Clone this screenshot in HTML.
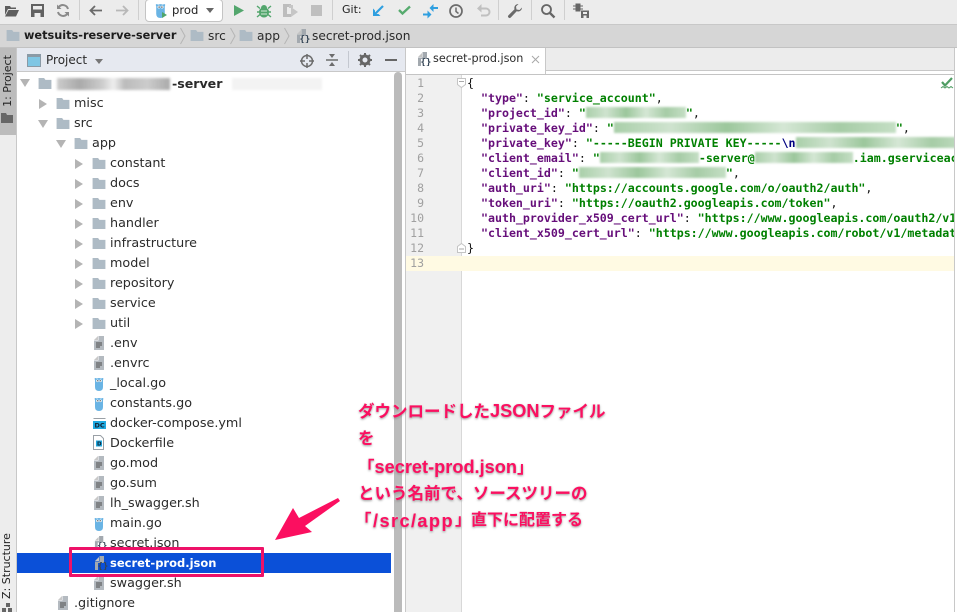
<!DOCTYPE html>
<html lang="ja"><head><meta charset="utf-8"><title>secret-prod.json</title>
<style>
html,body{margin:0;padding:0}
body{width:957px;height:612px;position:relative;overflow:hidden;background:#fff;font-family:"DejaVu Sans","Liberation Sans",sans-serif;color:#1c1c1c}
.a{position:absolute}
svg{position:absolute;overflow:visible}
.t{position:absolute;font-size:12.75px;line-height:20px;height:20px;white-space:nowrap;color:#2b2b2b}
.r{margin-top:1px}
.sep{position:absolute;top:0;width:1px;height:20px;background:#cfcfcf}
.code{position:absolute;left:467px;font:11.62px/15px "DejaVu Sans Mono","Liberation Mono",monospace;white-space:pre;height:15px;color:#111}
.code b{font-weight:bold;color:#660e7a}
.code i{font-style:normal;font-weight:bold;color:#008000}
.code u{text-decoration:none;display:inline-block;height:11px;vertical-align:-1px;background:linear-gradient(90deg,#a9cfa9,#cfe3cf 20%,#9cc79c 40%,#d5e7d5 60%,#a6cca6 80%,#c5dfc5);filter:blur(1px)}
.ln{position:absolute;left:406px;width:18px;text-align:right;font:11.5px/15px "DejaVu Sans Mono",monospace;color:#a0a0a0}
.n{position:absolute;left:358px;font-family:"Liberation Sans","Noto Sans CJK JP",sans-serif;font-weight:bold;font-size:16.5px;line-height:22px;color:#fb0f60;white-space:nowrap;text-shadow:0 1px 2px rgba(70,70,70,.55),0 0 2px #fff}
.n span{font-size:18.2px}
.blur{position:absolute;filter:blur(1.4px)}
</style></head><body>
<svg width="0" height="0" style="position:absolute">
<defs>
<symbol id="f" viewBox="0 0 14 12"><path d="M0 0h6l1.500 2H14v10H0z" fill="#aebbc5"/></symbol>
<symbol id="c" viewBox="0 0 8 10"><path d="M0 0l8 5-8 5z" fill="#b4b4b4"/></symbol>
<symbol id="o" viewBox="0 0 10 8"><path d="M0 0h10L5 8z" fill="#b4b4b4"/></symbol>
<symbol id="d" viewBox="0 0 10 14"><path d="M0 4L4 0v4z" fill="#c8c8c8"/><path d="M4.500 0H10v14H0V4.500h4.500z" fill="#b4bac0"/><path d="M2 7h6M2 9h6M2 11h4" stroke="#4a4a4a" stroke-width="1"/></symbol>
<symbol id="g" viewBox="0 0 10 14"><path d="M1 3Q0 1 1.500 1L3 1.500Q5 .5 7 1.500L8.500 1Q10 1 9 3V10Q9 14 5 14 1 14 1 10z" fill="#6ab4e4"/><circle cx="3.500" cy="3.800" r="1.300" fill="#fff"/><circle cx="6.500" cy="3.800" r="1.300" fill="#fff"/><circle cx="3.700" cy="3.800" r=".6" fill="#333"/><circle cx="6.300" cy="3.800" r=".6" fill="#333"/></symbol>
<symbol id="j" viewBox="0 0 14 14"><path d="M1 5L5 1v4z" fill="#c4c4c4"/><path d="M5.500 0H10v7H4v7H1V5.500h4.500z" fill="#a3a9af"/><text x="3.500" y="13" font-family="DejaVu Sans Mono" font-size="9" font-weight="bold" fill="#345">{}</text></symbol>
</defs></svg>

<!-- toolbar -->
<div class="a" style="left:0;top:0;width:957px;height:24px;background:#ececec;border-bottom:1px solid #c8c8c8"></div>
<svg style="left:5px;top:5px" width="14" height="12" viewBox="0 0 14 12"><path d="M0 1h5l1 1.500h5V4H3L0 10zM3.500 5H14l-3 6.500H0z" fill="#5e5e5e"/></svg>
<svg style="left:31px;top:4px" width="13" height="13" viewBox="0 0 13 13"><path d="M0 0h13v13H0z" fill="#616161"/><path d="M2 2h9v3.500H2z" fill="#ececec"/><path d="M3.500 9h6v4h-6z" fill="#ececec"/></svg>
<svg style="left:56px;top:4px" width="14" height="13" viewBox="0 0 14 13"><path d="M12 5A5.300 5.300 0 0 0 2.800 3M2 8a5.300 5.300 0 0 0 9.200 2" fill="none" stroke="#8a8a8a" stroke-width="2"/><path d="M1 .5v4.500h4.500zM13 12.500V8H8.500z" fill="#8a8a8a"/></svg>
<div class="sep" style="left:79px"></div>
<svg style="left:89px;top:5px" width="13" height="11" viewBox="0 0 13 11"><path d="M13 5.500H2M6 1L1.500 5.500 6 10" fill="none" stroke="#6a6a6a" stroke-width="1.800"/></svg>
<svg style="left:116px;top:5px" width="13" height="11" viewBox="0 0 13 11"><path d="M0 5.500h11M7 1l4.500 4.500L7 10" fill="none" stroke="#b8b8b8" stroke-width="1.800"/></svg>
<div class="sep" style="left:138px"></div>
<div class="a" style="left:145px;top:-1px;width:76px;height:21px;background:#fff;border:1px solid #c4c4c4;border-radius:4px"></div>
<svg style="left:155px;top:3px" width="12" height="15" viewBox="0 0 12 15"><use href="#g" width="11" height="15"/><path d="M7 9l5 3-5 3z" fill="#4fa66a"/></svg>
<div class="t" style="left:172px;top:0;font-size:11.6px;color:#222">prod</div>
<svg style="left:206px;top:8px" width="8" height="5"><path d="M0 0h8L4 5z" fill="#666"/></svg>
<svg style="left:234px;top:5px" width="10" height="11"><path d="M0 0l10 5.500L0 11z" fill="#53a66d"/></svg>
<svg style="left:257px;top:3px" width="14" height="15" viewBox="0 0 14 15"><path d="M4 5a3 3 0 0 1 6 0l0 .5c1.500.5 2 2 2 3.500 0 3-2 5.500-5 5.500S2 12 2 9c0-1.500.5-3 2-3.500z" fill="#53a66d"/><path d="M0 3l3 2.500M14 3l-3 2.500M0 9h3M14 9h-3M0 14l3-2.500M14 14l-3-2.500" stroke="#53a66d" stroke-width="1.400"/><path d="M4 8h6M4 11h6" stroke="#d6ead9" stroke-width="1"/></svg>
<svg style="left:283px;top:4px" width="15" height="14" viewBox="0 0 15 14"><path d="M0 0h8v3H4v7h4v3H0z" fill="#bdbdbd"/><path d="M8 3l7 5-7 5z" fill="#c6c6c6"/><path d="M6 1h4v3H6z" fill="#c6c6c6"/></svg>
<div class="a" style="left:311px;top:5px;width:11px;height:11px;background:#bfbfbf"></div>
<div class="sep" style="left:332px"></div>
<div class="t" style="left:342px;top:0;font-size:11px;color:#222">Git:</div>
<svg style="left:373px;top:5px" width="11" height="11" viewBox="0 0 11 11"><path d="M10 1L2 9" stroke="#2f9fe0" stroke-width="2.200"/><path d="M0 3.500V11h7.500L5.500 9H2V5.500z" fill="#2f9fe0"/></svg>
<svg style="left:398px;top:5px" width="13" height="10" viewBox="0 0 13 10"><path d="M1 5l3.500 3.500L12 1.500" fill="none" stroke="#56ab6e" stroke-width="2.300"/></svg>
<svg style="left:423px;top:4px" width="15" height="14" viewBox="0 0 15 14"><path d="M15 4H10M0 10.500h5" stroke="#2f9fe0" stroke-width="2"/><path d="M10.500 0v8L6.500 4zM4.500 6.500v8l4-4z" fill="#2f9fe0"/></svg>
<svg style="left:449px;top:4px" width="14" height="14" viewBox="0 0 14 14"><circle cx="7" cy="7" r="6" fill="none" stroke="#6c6c6c" stroke-width="1.700"/><path d="M7 3.500V7.500l2.500 2" fill="none" stroke="#6c6c6c" stroke-width="1.500"/></svg>
<svg style="left:477px;top:4px" width="13" height="13" viewBox="0 0 13 13"><path d="M3 4.500h6a3.500 3.500 0 0 1 0 7H4" fill="none" stroke="#c0c0c0" stroke-width="2"/><path d="M4.500 0v8.500L0 4.500z" fill="#c0c0c0"/></svg>
<div class="sep" style="left:498px"></div>
<svg style="left:508px;top:4px" width="14" height="14" viewBox="0 0 14 14"><path d="M14 3.500a4 4 0 0 1-5.300 3.800L2.800 13.500a1.500 1.500 0 0 1-2.300-2.300l6-6A4 4 0 0 1 10.500 0L8 2.500l.5 3 3 .5z" fill="#6a6a6a"/></svg>
<div class="sep" style="left:531px"></div>
<svg style="left:541px;top:4px" width="14" height="14" viewBox="0 0 14 14"><circle cx="5.500" cy="5.500" r="4.500" fill="none" stroke="#666" stroke-width="1.800"/><path d="M9 9l4.500 4.500" stroke="#666" stroke-width="2.300"/></svg>
<div class="sep" style="left:564px"></div>
<svg style="left:573px;top:4px" width="16" height="14" viewBox="0 0 16 14"><path d="M3 0h4v7H3zM0 2h3M0 5h3M7 2h3M7 5h3" stroke="#666" fill="#666" stroke-width="1"/><path d="M8 6.500h8V14H8z" fill="#666"/><path d="M10 8h4v2h-4zM10.500 11.500h3V14h-3z" fill="#ececec"/></svg>

<!-- breadcrumbs -->
<div class="a" style="left:0;top:25px;width:957px;height:22px;background:#d6d6d6;border-bottom:1px solid #c2c2c2"></div>
<svg style="left:6px;top:30px" width="14" height="11"><use href="#f" width="14" height="11"/></svg>
<div class="t" style="left:24px;top:26px;font-weight:bold;font-size:11.3px;color:#1d1d1d">wetsuits-reserve-server</div>
<svg style="left:180px;top:28px" width="6" height="16"><path d="M.5 0l4.500 8-4.500 8" fill="none" stroke="#b5b5b5"/></svg>
<svg style="left:190px;top:30px" width="14" height="11"><use href="#f" width="14" height="11"/></svg>
<div class="t" style="left:208px;top:26px;font-size:12.2px">src</div>
<svg style="left:230px;top:28px" width="6" height="16"><path d="M.5 0l4.500 8-4.500 8" fill="none" stroke="#b5b5b5"/></svg>
<svg style="left:239px;top:30px" width="14" height="11"><use href="#f" width="14" height="11"/></svg>
<div class="t" style="left:257px;top:26px;font-size:12.2px">app</div>
<svg style="left:284px;top:28px" width="6" height="16"><path d="M.5 0l4.500 8-4.500 8" fill="none" stroke="#b5b5b5"/></svg>
<svg style="left:296px;top:29px" width="14" height="14"><use href="#j" width="14" height="14"/></svg>
<div class="t" style="left:312px;top:26px;font-size:12.2px">secret-prod.json</div>

<!-- left stripe -->
<div class="a" style="left:0;top:48px;width:16px;height:564px;background:#ededed;border-right:1px solid #c8c8c8"></div>
<div class="a" style="left:0;top:48px;width:16px;height:87px;background:#bcbcbc"></div>
<div class="a" style="left:-26px;top:73px;width:68px;height:16px;line-height:16px;font-size:11px;transform:rotate(-90deg);text-align:center;white-space:nowrap;color:#222">1: Project</div>
<svg style="left:1px;top:113px" width="12" height="10"><path d="M0 0h5l1 2h6v8H0z" fill="#666"/></svg>
<div class="a" style="left:-28px;top:558px;width:70px;height:16px;line-height:16px;font-size:11px;transform:rotate(-90deg);text-align:center;white-space:nowrap;color:#222">Z: Structure</div>
<svg style="left:2px;top:603px" width="11" height="9"><path d="M4 0h4v4H4zM0 5h4v4H0zM6 5h4v4H6z" fill="#666"/></svg>

<!-- project header -->
<div class="a" style="left:17px;top:48px;width:389px;height:23px;background:#e6e9f0;border-bottom:1px solid #c8c8c8"></div>
<svg style="left:27px;top:54px" width="14" height="13"><path d="M0 0h14v13H0z" fill="#8a9aa6"/><path d="M1 3h12v9H1z" fill="#7fc6e4"/></svg>
<div class="t" style="left:46px;top:50px;font-size:12px">Project</div>
<svg style="left:95px;top:59px" width="8" height="5"><path d="M0 0h8L4 5z" fill="#777"/></svg>
<svg style="left:300px;top:54px" width="14" height="14" viewBox="0 0 14 14"><circle cx="7" cy="7" r="5.500" fill="none" stroke="#6c6c6c" stroke-width="1.500"/><path d="M7 0v5M7 9v5M0 7h5M9 7h5" stroke="#6c6c6c" stroke-width="1.500"/></svg>
<svg style="left:326px;top:53px" width="12" height="14" viewBox="0 0 12 14"><path d="M0 7h12" stroke="#6c6c6c" stroke-width="1.500"/><path d="M3 1h6L6 5zM3 13h6L6 9z" fill="#6c6c6c"/></svg>
<div class="a" style="left:348px;top:51px;width:1px;height:17px;background:#c4c8d0"></div>
<svg style="left:358px;top:53px" width="14" height="14" viewBox="0 0 14 14"><circle cx="7" cy="7" r="4" fill="none" stroke="#666" stroke-width="3"/><path d="M7 0v3M7 11v3M0 7h3M11 7h3M2 2l2 2M10 10l2 2M12 2l-2 2M2 12l2-2" stroke="#666" stroke-width="2"/></svg>
<div class="a" style="left:385px;top:59px;width:12px;height:2px;background:#666"></div>

<!-- tree -->
<div class="a blur" style="left:57px;top:78px;width:113px;height:12px;background:linear-gradient(90deg,#ccc,#aaa 20%,#ccc 40%,#eee 50%,#bbb 60%,#ccc 80%,#aaa)"></div>
<div class="a blur" style="left:232px;top:78px;width:90px;height:12px;background:#f3f3f3"></div>
<svg style="left:20px;top:79px" width="10" height="8"><use href="#o" width="10" height="8"/></svg>
<svg style="left:38px;top:78px" width="14" height="11"><use href="#f" width="14" height="11"/></svg>
<div class="t r" style="left:172px;top:73px;font-weight:bold;font-size:12.6px">-server</div>

<svg style="left:39px;top:99px" width="8" height="10"><use href="#c" width="8" height="10"/></svg>
<svg style="left:56px;top:98px" width="14" height="11"><use href="#f" width="14" height="11"/></svg>
<div class="t r" style="left:74px;top:93px">misc</div>
<svg style="left:38px;top:120px" width="10" height="8"><use href="#o" width="10" height="8"/></svg>
<svg style="left:56px;top:118px" width="14" height="11"><use href="#f" width="14" height="11"/></svg>
<div class="t r" style="left:74px;top:113px">src</div>
<svg style="left:56px;top:140px" width="10" height="8"><use href="#o" width="10" height="8"/></svg>
<svg style="left:74px;top:138px" width="14" height="11"><use href="#f" width="14" height="11"/></svg>
<div class="t r" style="left:92px;top:133px">app</div>

<svg style="left:75px;top:159px" width="8" height="10"><use href="#c" width="8" height="10"/></svg><svg style="left:92px;top:158px" width="14" height="11"><use href="#f" width="14" height="11"/></svg><div class="t r" style="left:110px;top:153px">constant</div>
<svg style="left:75px;top:179px" width="8" height="10"><use href="#c" width="8" height="10"/></svg><svg style="left:92px;top:178px" width="14" height="11"><use href="#f" width="14" height="11"/></svg><div class="t r" style="left:110px;top:173px">docs</div>
<svg style="left:75px;top:199px" width="8" height="10"><use href="#c" width="8" height="10"/></svg><svg style="left:92px;top:198px" width="14" height="11"><use href="#f" width="14" height="11"/></svg><div class="t r" style="left:110px;top:193px">env</div>
<svg style="left:75px;top:219px" width="8" height="10"><use href="#c" width="8" height="10"/></svg><svg style="left:92px;top:218px" width="14" height="11"><use href="#f" width="14" height="11"/></svg><div class="t r" style="left:110px;top:213px">handler</div>
<svg style="left:75px;top:239px" width="8" height="10"><use href="#c" width="8" height="10"/></svg><svg style="left:92px;top:238px" width="14" height="11"><use href="#f" width="14" height="11"/></svg><div class="t r" style="left:110px;top:233px">infrastructure</div>
<svg style="left:75px;top:259px" width="8" height="10"><use href="#c" width="8" height="10"/></svg><svg style="left:92px;top:258px" width="14" height="11"><use href="#f" width="14" height="11"/></svg><div class="t r" style="left:110px;top:253px">model</div>
<svg style="left:75px;top:279px" width="8" height="10"><use href="#c" width="8" height="10"/></svg><svg style="left:92px;top:278px" width="14" height="11"><use href="#f" width="14" height="11"/></svg><div class="t r" style="left:110px;top:273px">repository</div>
<svg style="left:75px;top:299px" width="8" height="10"><use href="#c" width="8" height="10"/></svg><svg style="left:92px;top:298px" width="14" height="11"><use href="#f" width="14" height="11"/></svg><div class="t r" style="left:110px;top:293px">service</div>
<svg style="left:75px;top:319px" width="8" height="10"><use href="#c" width="8" height="10"/></svg><svg style="left:92px;top:318px" width="14" height="11"><use href="#f" width="14" height="11"/></svg><div class="t r" style="left:110px;top:313px">util</div>

<svg style="left:94px;top:336px" width="10" height="14"><use href="#d" width="10" height="14"/></svg><div class="t r" style="left:110px;top:333px">.env</div>
<svg style="left:94px;top:356px" width="10" height="14"><use href="#d" width="10" height="14"/></svg><div class="t r" style="left:110px;top:353px">.envrc</div>
<svg style="left:94px;top:377px" width="10" height="14"><use href="#g" width="10" height="14"/></svg><div class="t r" style="left:110px;top:373px">_local.go</div>
<svg style="left:94px;top:397px" width="10" height="14"><use href="#g" width="10" height="14"/></svg><div class="t r" style="left:110px;top:393px">constants.go</div>
<svg style="left:93px;top:416px" width="13" height="15" viewBox="0 0 13 15"><path d="M.5 2.500h12" stroke="#9aa0a6"/><path d="M0 5h13v8H0z" fill="#1fa9e0"/><text x="1.500" y="11.500" font-family="DejaVu Sans" font-size="6.500" font-weight="bold" fill="#123">DC</text></svg><div class="t r" style="left:110px;top:413px">docker-compose.yml</div>
<svg style="left:93px;top:435px" width="11" height="15" viewBox="0 0 11 15"><path d="M.5.500h7l3 3v11H.5z" fill="#fff" stroke="#9aa0a6"/><path d="M3 5.500h6v6H3z" fill="#1fa9e0"/><text x="4" y="10.500" font-family="DejaVu Sans" font-size="5.500" font-weight="bold" fill="#123">D</text></svg><div class="t r" style="left:110px;top:433px">Dockerfile</div>
<svg style="left:94px;top:456px" width="10" height="14"><use href="#d" width="10" height="14"/></svg><div class="t r" style="left:110px;top:453px">go.mod</div>
<svg style="left:94px;top:476px" width="10" height="14"><use href="#d" width="10" height="14"/></svg><div class="t r" style="left:110px;top:473px">go.sum</div>
<svg style="left:94px;top:496px" width="10" height="14"><use href="#d" width="10" height="14"/></svg><div class="t r" style="left:110px;top:493px">lh_swagger.sh</div>
<svg style="left:94px;top:517px" width="10" height="14"><use href="#g" width="10" height="14"/></svg><div class="t r" style="left:110px;top:513px">main.go</div>
<svg style="left:94px;top:536px" width="13" height="13"><use href="#j" width="13" height="13"/></svg><div class="t r" style="left:110px;top:533px">secret.json</div>

<div class="a" style="left:72px;top:550px;width:189px;height:24px;background:#fff"></div>
<div class="a" style="left:17px;top:553px;width:374px;height:20px;background:#0b50d8"></div>
<svg style="left:94px;top:556px" width="14" height="14"><use href="#j" width="14" height="14"/></svg>
<div class="t r" style="left:110px;top:552px;color:#fff;font-weight:bold;font-size:11.5px">secret-prod.json</div>

<svg style="left:94px;top:576px" width="10" height="14"><use href="#d" width="10" height="14"/></svg><div class="t r" style="left:110px;top:573px">swagger.sh</div>
<svg style="left:58px;top:596px" width="10" height="14"><use href="#d" width="10" height="14"/></svg><div class="t r" style="left:74px;top:593px">.gitignore</div>

<!-- scrollbar -->
<div class="a" style="left:394px;top:72px;width:8px;height:540px;background:#bbb;border-radius:4px 4px 0 0"></div>
<div class="a" style="left:405px;top:48px;width:1px;height:564px;background:#c8c8c8"></div>

<!-- editor tab bar -->
<div class="a" style="left:406px;top:48px;width:548px;height:22px;background:#ececec;border-bottom:1px solid #c8c8c8"></div>
<div class="a" style="left:406px;top:48px;width:140px;height:26px;background:#fff;border-right:1px solid #c8c8c8;box-sizing:border-box"></div>
<div class="a" style="left:406px;top:74px;width:548px;height:1px;background:#c4c4c4"></div>
<div class="a" style="left:954px;top:48px;width:1px;height:564px;background:#c8c8c8"></div>
<svg style="left:417px;top:52px" width="14" height="14"><use href="#j" width="14" height="14"/></svg>
<div class="t" style="left:433px;top:49px;font-size:11.2px">secret-prod.json</div>
<svg style="left:532px;top:56px" width="7" height="7"><path d="M0 0l7 7M7 0L0 7" stroke="#a8a8a8"/></svg>

<!-- gutter -->
<div class="a" style="left:406px;top:75px;width:55px;height:537px;background:#f0f0f0;border-right:1px solid #d8d8d8"></div>
<div class="a" style="left:406px;top:256px;width:548px;height:15px;background:#fffae3"></div>
<div class="ln" style="top:76px">1</div><div class="ln" style="top:91px">2</div><div class="ln" style="top:106px">3</div><div class="ln" style="top:121px">4</div><div class="ln" style="top:136px">5</div><div class="ln" style="top:151px">6</div><div class="ln" style="top:166px">7</div><div class="ln" style="top:181px">8</div><div class="ln" style="top:196px">9</div><div class="ln" style="top:211px">10</div><div class="ln" style="top:226px">11</div><div class="ln" style="top:241px">12</div><div class="ln" style="top:256px">13</div>
<svg style="left:457px;top:78px" width="9" height="10"><path d="M.5.500h8v6L4.500 9.500.5 6.500z" fill="#fff" stroke="#c4c4c4"/><path d="M2 3.500h5" stroke="#aaa"/></svg>
<svg style="left:457px;top:243px" width="9" height="10"><path d="M.5 9.500h8v-6L4.500.5.500 3.500z" fill="#fff" stroke="#c4c4c4"/><path d="M2 6h5" stroke="#aaa"/></svg>

<!-- code -->
<div class="a" style="left:467px;top:75px;width:487px;height:196px;overflow:hidden">
<div class="code" style="left:0;top:1px">{</div>
<div class="code" style="left:0;top:16px">  <b>"type"</b>: <i>"service_account"</i>,</div>
<div class="code" style="left:0;top:31px">  <b>"project_id"</b>: <i>"</i><u style="width:100px"></u><i>"</i>,</div>
<div class="code" style="left:0;top:46px">  <b>"private_key_id"</b>: <i>"</i><u style="width:282px"></u><i>"</i>,</div>
<div class="code" style="left:0;top:61px">  <b>"private_key"</b>: <i>"-----BEGIN PRIVATE KEY-----</i><span style="color:#000080;font-weight:bold">\n</span><u style="width:170px"></u></div>
<div class="code" style="left:0;top:76px">  <b>"client_email"</b>: <i>"</i><u style="width:99px"></u><i>-server@</i><u style="width:98px"></u><i>.iam.gserviceaccount.com"</i>,</div>
<div class="code" style="left:0;top:91px">  <b>"client_id"</b>: <i>"</i><u style="width:147px"></u><i>"</i>,</div>
<div class="code" style="left:0;top:106px">  <b>"auth_uri"</b>: <i>"https://accounts.google.com/o/oauth2/auth"</i>,</div>
<div class="code" style="left:0;top:121px">  <b>"token_uri"</b>: <i>"https://oauth2.googleapis.com/token"</i>,</div>
<div class="code" style="left:0;top:136px">  <b>"auth_provider_x509_cert_url"</b>: <i>"https://www.googleapis.com/oauth2/v1/certs"</i>,</div>
<div class="code" style="left:0;top:151px">  <b>"client_x509_cert_url"</b>: <i>"https://www.googleapis.com/robot/v1/metadata/x509"</i></div>
<div class="code" style="left:0;top:166px">}</div>
</div>
<svg style="left:941px;top:77px" width="12" height="13" viewBox="0 0 12 13"><path d="M1 5l3 3.500L11 1" fill="none" stroke="#4f9d63" stroke-width="2.200"/><path d="M0 11l2-1.500 2 1.500 2-1.500 2 1.500 2-1.500 2 1.500" fill="none" stroke="#4f9d63"/></svg>

<!-- annotation -->
<div class="a" style="left:69px;top:547px;width:189px;height:24px;border:3px solid #ee1268;border-radius:1px"></div>
<svg style="left:270px;top:490px" width="75" height="55" viewBox="270 490 75 55"><path d="M275 540L293 508 299 518 338 498 340 501 305 526 312 532z" fill="#fb0f60"/></svg>
<div class="n" style="top:400px">ダウンロードした<span>JSON</span>ファイル</div>
<div class="n" style="top:428px">を</div>
<div class="n" style="top:456px">「<span>secret-prod.json</span>」</div>
<div class="n" style="top:483px">という名前で、ソースツリーの</div>
<div class="n" style="top:510px;left:355px">「</div>
<div class="n" style="top:510px;left:373px"><span style="letter-spacing:1.4px">/src/app</span></div>
<div class="n" style="top:510px;left:455px;font-size:16px">」直下に配置する</div>
</body></html>
